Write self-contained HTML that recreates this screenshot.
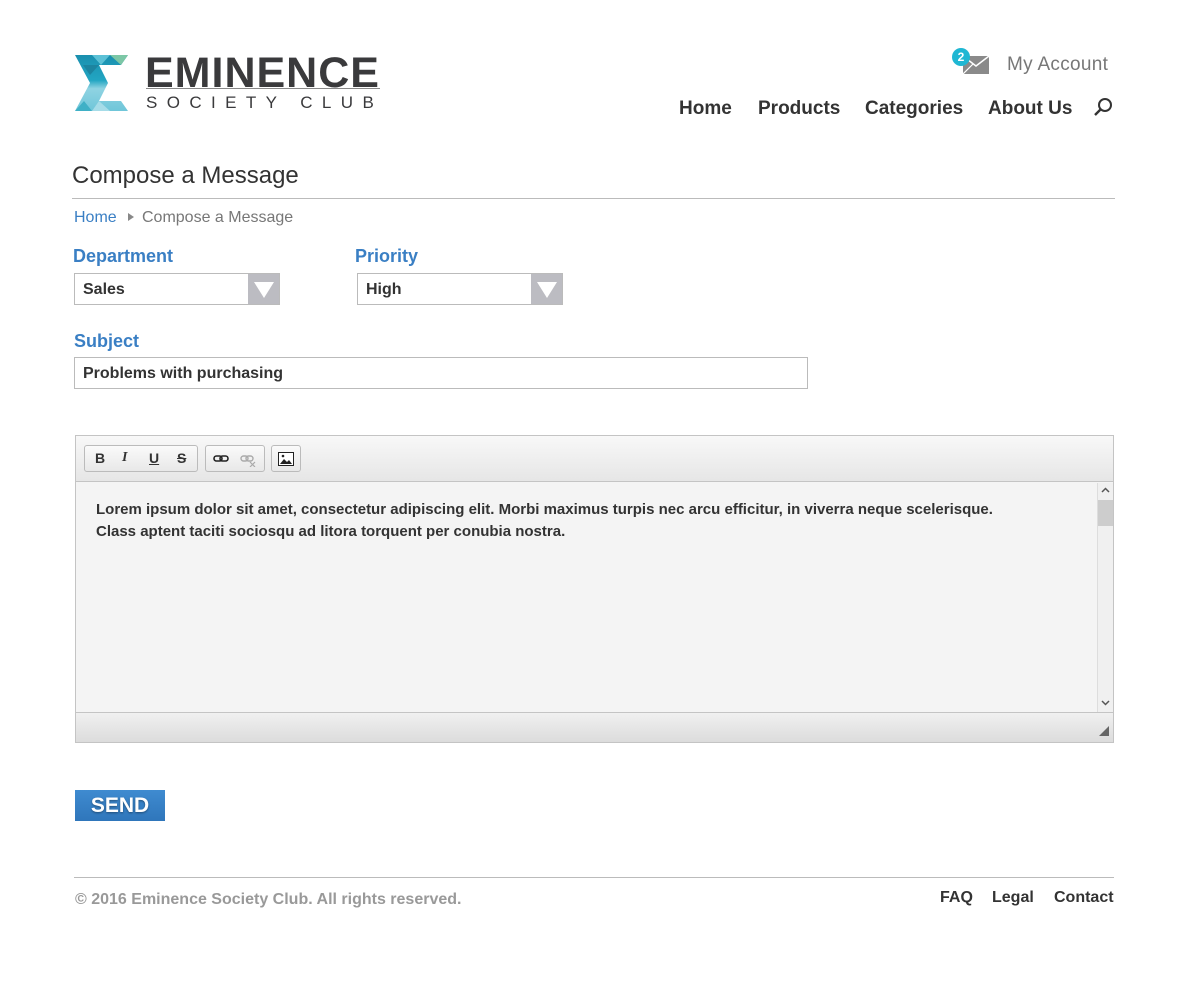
<!DOCTYPE html>
<html><head><meta charset="utf-8"><style>
*{margin:0;padding:0;box-sizing:border-box}
body{width:1200px;height:1000px;background:#fff;font-family:"Liberation Sans",sans-serif;color:#333;position:relative;overflow:hidden}
.a{position:absolute}
.lbl{color:#3a7fc4;font-size:18px;font-weight:bold}
.sel{border:1px solid #bbb;height:32px;font-size:16px;font-weight:bold;padding:7px 8px;background:#fff}
.sel .ar{position:absolute;right:0;top:0;width:31px;height:30px;background:#bcbcc2}
.sel .ar:after{content:"";position:absolute;left:6px;top:8px;border-left:10px solid transparent;border-right:10px solid transparent;border-top:16px solid #fff}
.nav{font-size:19px;font-weight:bold;color:#333}
.grp{position:absolute;top:9px;height:27px;border:1px solid #bbb;border-radius:3px;background:linear-gradient(#fafafa,#e8e8e8)}
.b{position:absolute;top:4px;font-size:14px;font-weight:bold;color:#333}
</style></head><body>
<svg class="a" style="left:75px;top:55px" width="53" height="56" viewBox="0 0 53 56">
<defs><linearGradient id="g" x1="0" y1="0" x2="0" y2="1"><stop offset="0" stop-color="#1a8fae"/><stop offset=".45" stop-color="#22a5c2"/><stop offset=".6" stop-color="#8fd3e2"/><stop offset="1" stop-color="#6fc6d9"/></linearGradient></defs>
<polygon points="0,0 53,0 46,10 24,10 33,28 24,46 46,46 53,56 0,56 15,28" fill="url(#g)"/>
<polygon points="17,0 35,0 26,10" fill="#5cc1d6"/><polygon points="35,0 53,0 46,10" fill="#7cc7a6"/>
<polygon points="8,10 24,10 15,20" fill="#1c84a0"/><polygon points="24,46 35,56 17,56" fill="#a6dce8"/><polygon points="0,56 17,56 9,46" fill="#3fb0c6"/>
</svg>
<div class="a" style="left:145px;top:48px;font-size:43px;font-weight:bold;color:#3a3a3c;letter-spacing:1px;line-height:50px">EMINENCE</div>
<div class="a" style="left:146px;top:88px;width:234px;height:1px;background:#888"></div>
<div class="a" style="left:146px;top:92px;font-size:17px;color:#3a3a3c;letter-spacing:9.4px;line-height:22px">SOCIETY CLUB</div>

<svg class="a" style="left:963px;top:56px" width="26" height="18" viewBox="0 0 26 18"><rect x="0" y="0" width="26" height="18" fill="#8a8a8a"/><polyline points="0,0 13,10 26,0" fill="none" stroke="#fff" stroke-width="1.5"/><polyline points="0,18 10,8 M16,8 26,18" fill="none" stroke="#fff" stroke-width="1.2"/></svg>
<div class="a" style="left:952px;top:48px;width:18px;height:18px;border-radius:50%;background:#1fb7d3;color:#fff;font-size:12px;font-weight:bold;text-align:center;line-height:18px">2</div>
<div class="a" style="left:1007px;top:54px;font-size:19px;color:#777;letter-spacing:0.3px">My Account</div>
<div class="a nav" style="left:679px;top:98px">Home</div>
<div class="a nav" style="left:758px;top:98px">Products</div>
<div class="a nav" style="left:865px;top:98px">Categories</div>
<div class="a nav" style="left:988px;top:98px">About Us</div>
<svg class="a" style="left:1093px;top:97px" width="20" height="20" viewBox="0 0 20 20"><circle cx="12" cy="8" r="6" fill="none" stroke="#333" stroke-width="2"/><line x1="8" y1="12" x2="2" y2="18" stroke="#333" stroke-width="2.4"/></svg>

<div class="a" style="left:72px;top:162px;font-size:24px;color:#333">Compose a Message</div>
<div class="a" style="left:72px;top:198px;width:1043px;height:1px;background:#bbb"></div>
<div class="a" style="left:74px;top:209px;font-size:16px;color:#3a7fc4">Home</div>
<div class="a" style="left:128px;top:213px;border-top:4px solid transparent;border-bottom:4px solid transparent;border-left:6px solid #888"></div>
<div class="a" style="left:142px;top:209px;font-size:16px;color:#777">Compose a Message</div>

<div class="a lbl" style="left:73px;top:246px">Department</div>
<div class="a lbl" style="left:355px;top:246px">Priority</div>
<div class="a sel" style="left:74px;top:273px;width:206px">Sales<div class="ar"></div></div>
<div class="a sel" style="left:357px;top:273px;width:206px">High<div class="ar"></div></div>
<div class="a lbl" style="left:74px;top:331px">Subject</div>
<div class="a sel" style="left:74px;top:357px;width:734px">Problems with purchasing</div>

<div class="a" style="left:75px;top:435px;width:1039px;height:308px;border:1px solid #c4c4c4;background:#f4f4f4">
 <div class="a" style="left:0;top:0;width:1037px;height:46px;background:linear-gradient(#f8f8f8,#e6e6e6);border-bottom:1px solid #c4c4c4">
  <div class="grp" style="left:8px;width:114px">
   <span class="b" style="left:10px">B</span><span class="b" style="left:37px;font-style:italic;font-family:'Liberation Serif',serif">I</span><span class="b" style="left:64px;text-decoration:underline">U</span><span class="b" style="left:92px;text-decoration:line-through">S</span>
  </div>
  <div class="grp" style="left:129px;width:60px">
   <svg class="a" style="left:7px;top:8px" width="16" height="10"><rect x="1" y="2" width="8" height="5" rx="2.5" fill="none" stroke="#222" stroke-width="1.6"/><rect x="7" y="2" width="8" height="5" rx="2.5" fill="none" stroke="#222" stroke-width="1.6"/></svg>
   <svg class="a" style="left:34px;top:8px" width="18" height="13"><rect x="1" y="2" width="7" height="5" rx="2.5" fill="none" stroke="#aaa" stroke-width="1.4"/><rect x="6" y="2" width="7" height="5" rx="2.5" fill="none" stroke="#aaa" stroke-width="1.4"/><path d="M10 8l5 5M15 8l-5 5" stroke="#aaa" stroke-width="1.2"/></svg>
  </div>
  <div class="grp" style="left:195px;width:30px">
   <svg class="a" style="left:6px;top:6px" width="16" height="14"><rect x="0.5" y="0.5" width="15" height="13" fill="#fff" stroke="#222"/><path d="M2 12l4-5 3 3 2-2 3 4z" fill="#222"/><circle cx="5" cy="4" r="1.3" fill="#222"/></svg>
  </div>
 </div>
 <div class="a" style="left:20px;top:63px;width:950px;font-size:15px;font-weight:bold;line-height:22px;color:#333">Lorem ipsum dolor sit amet, consectetur adipiscing elit. Morbi maximus turpis nec arcu efficitur, in viverra neque scelerisque.<br>Class aptent taciti sociosqu ad litora torquent per conubia nostra.</div>
 <div class="a" style="left:1021px;top:47px;width:16px;height:229px;background:#f0f0f0;border-left:1px solid #ddd">
  <svg class="a" style="left:3px;top:4px" width="9" height="6"><path d="M1 5l3.5-3.5L8 5" fill="none" stroke="#555" stroke-width="1.5"/></svg>
  <div class="a" style="left:0;top:17px;width:15px;height:26px;background:#cdcdcd"></div>
  <svg class="a" style="left:3px;top:217px" width="9" height="6"><path d="M1 1l3.5 3.5L8 1" fill="none" stroke="#555" stroke-width="1.5"/></svg>
 </div>
 <div class="a" style="left:0;top:276px;width:1037px;height:30px;background:linear-gradient(#f0f0f0,#dcdcdc);border-top:1px solid #c4c4c4">
  <div class="a" style="right:4px;bottom:6px;border-left:10px solid transparent;border-bottom:10px solid #666"></div>
 </div>
</div>

<div class="a" style="left:75px;top:790px;width:90px;height:31px;background:linear-gradient(#3f8bd0,#2f76bb);color:#fff;font-size:21px;font-weight:bold;text-align:center;line-height:31px;text-shadow:0 1px 2px rgba(0,0,0,.4)">SEND</div>

<div class="a" style="left:74px;top:877px;width:1040px;height:1px;background:#bbb"></div>
<div class="a" style="left:75px;top:891px;font-size:16px;font-weight:bold;color:#999">© 2016 Eminence Society Club. All rights reserved.</div>
<div class="a" style="left:940px;top:889px;font-size:16px;font-weight:bold;color:#333">FAQ</div>
<div class="a" style="left:992px;top:889px;font-size:16px;font-weight:bold;color:#333">Legal</div>
<div class="a" style="left:1054px;top:889px;font-size:16px;font-weight:bold;color:#333">Contact</div>
</body></html>
